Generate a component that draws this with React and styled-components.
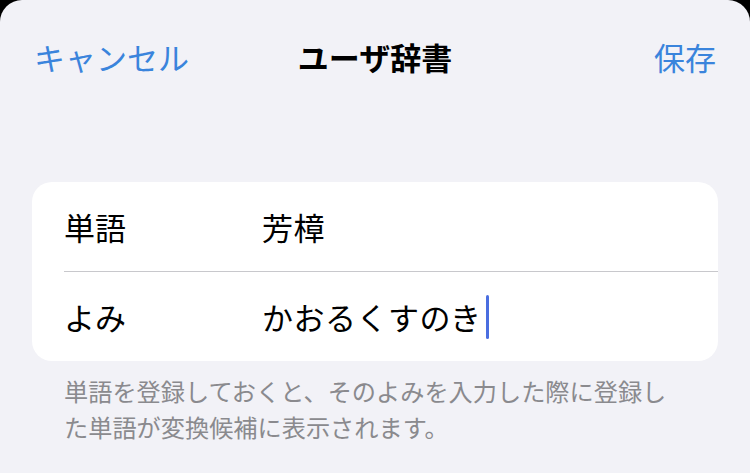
import React from "react";
import styled, { createGlobalStyle } from "styled-components";

const Global = createGlobalStyle`
  html, body { margin: 0; padding: 0; background: #000; }
  body { font-family: "Noto Sans CJK JP", "Noto Sans", sans-serif; }
  * { box-sizing: border-box; }
`;

const Sheet = styled.div`
  width: 750px;
  height: 473px;
  background: #f2f2f7;
  border-radius: 22px 22px 0 0;
  overflow: hidden;
  display: flex;
  flex-direction: column;
`;

const NavBar = styled.div`
  height: 112px;
  padding: 0 34px;
  display: grid;
  grid-template-columns: 1fr auto 1fr;
  align-items: center;
`;

const NavButton = styled.div`
  font-size: 31px;
  color: #3a84dc;
  justify-self: ${(p) => (p.$end ? "end" : "start")};
  line-height: 1;
`;

const Title = styled.div`
  font-size: 31px;
  font-weight: 700;
  color: #000;
  line-height: 1;
`;

const Card = styled.div`
  margin: 70px 32px 0;
  background: #fff;
  border-radius: 20px;
  padding-left: 32px;
`;

const Row = styled.div`
  height: ${(p) => (p.$last ? "89px" : "90px")};
  display: flex;
  align-items: center;
  border-bottom: ${(p) => (p.$last ? "none" : "1px solid #c8c8cc")};
`;

const Label = styled.div`
  width: 198px;
  font-size: 31px;
  color: #000;
  line-height: 1;
`;

const Value = styled.div`
  font-size: 31px;
  color: #000;
  line-height: 1;
  display: flex;
  align-items: center;
  letter-spacing: 0.5px;
`;

const Caret = styled.span`
  display: inline-block;
  width: 3px;
  height: 44px;
  background: #4a6ee0;
  border-radius: 2px;
  margin-left: 4px;
`;

const Footer = styled.p`
  margin: 12px 0 0;
  padding: 0 66px 0 64px;
  font-size: 24.2px;
  line-height: 36px;
  color: #8a8a8e;
`;

export default function App() {
  return (
    <>
      <Global />
      <Sheet>
        <NavBar>
          <NavButton>キャンセル</NavButton>
          <Title>ユーザ辞書</Title>
          <NavButton $end>保存</NavButton>
        </NavBar>
        <Card>
          <Row>
            <Label>単語</Label>
            <Value>芳樟</Value>
          </Row>
          <Row $last>
            <Label>よみ</Label>
            <Value>
              かおるくすのき
              <Caret />
            </Value>
          </Row>
        </Card>
        <Footer>
          単語を登録しておくと、そのよみを入力した際に登録した単語が変換候補に表示されます。
        </Footer>
      </Sheet>
    </>
  );
}
